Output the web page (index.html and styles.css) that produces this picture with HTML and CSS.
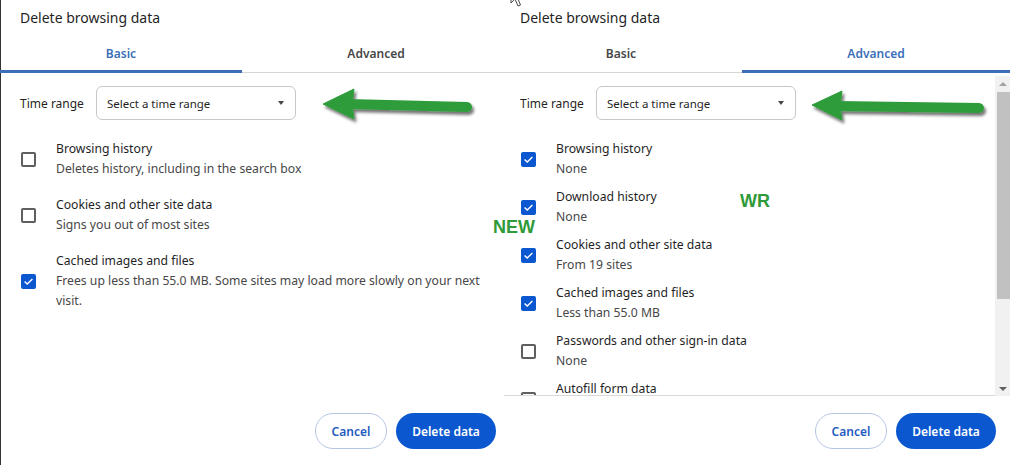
FILE: index.html
```html
<!DOCTYPE html>
<html lang="en">
<head>
<meta charset="utf-8">
<title>Delete browsing data</title>
<link rel="stylesheet" href="styles.css">
</head>
<body>
<div class="page">
  <section class="panel panel-left">
    <div class="panel-inner">
      <h1 class="title">Delete browsing data</h1>
      <div class="tabs">
        <div class="tab tab-basic active">Basic</div>
        <div class="tab tab-adv">Advanced</div>
      </div>
      <div class="body">
        <div class="range-row">
          <span class="range-label">Time range</span>
          <div class="select"><span>Select a time range</span><span class="caret"></span></div>
        </div>
        <ul class="items items-basic">
          <li class="item">
            <span class="cb"></span>
            <div class="item-text">
              <div class="item-title">Browsing history</div>
              <div class="item-sub">Deletes history, including in the search box</div>
            </div>
          </li>
          <li class="item">
            <span class="cb"></span>
            <div class="item-text">
              <div class="item-title">Cookies and other site data</div>
              <div class="item-sub">Signs you out of most sites</div>
            </div>
          </li>
          <li class="item">
            <span class="cb on"><svg viewBox="0 0 15 15" width="15" height="15"><path d="M3.6 7.6 L6.2 10.1 L11.4 4.9" fill="none" stroke="#fff" stroke-width="1.4"/></svg></span>
            <div class="item-text">
              <div class="item-title">Cached images and files</div>
              <div class="item-sub">Frees up less than 55.0 MB. Some sites may load more slowly on your next visit.</div>
            </div>
          </li>
        </ul>
      </div>
      <div class="footer">
        <button class="btn btn-cancel">Cancel</button>
        <button class="btn btn-primary">Delete data</button>
      </div>
    </div>
  </section>

  <section class="panel panel-right">
    <h1 class="title">Delete browsing data</h1>
    <div class="tabs">
      <div class="tab tab-basic">Basic</div>
      <div class="tab tab-adv active">Advanced</div>
    </div>
    <div class="scroll-area">
      <div class="scroll-content">
        <div class="range-row">
          <span class="range-label">Time range</span>
          <div class="select"><span>Select a time range</span><span class="caret"></span></div>
        </div>
        <ul class="items items-adv">
          <li class="item">
            <span class="cb on"><svg viewBox="0 0 15 15" width="15" height="15"><path d="M3.6 7.6 L6.2 10.1 L11.4 4.9" fill="none" stroke="#fff" stroke-width="1.4"/></svg></span>
            <div class="item-text">
              <div class="item-title">Browsing history</div>
              <div class="item-sub">None</div>
            </div>
          </li>
          <li class="item">
            <span class="cb on"><svg viewBox="0 0 15 15" width="15" height="15"><path d="M3.6 7.6 L6.2 10.1 L11.4 4.9" fill="none" stroke="#fff" stroke-width="1.4"/></svg></span>
            <div class="item-text">
              <div class="item-title">Download history</div>
              <div class="item-sub">None</div>
            </div>
          </li>
          <li class="item">
            <span class="cb on"><svg viewBox="0 0 15 15" width="15" height="15"><path d="M3.6 7.6 L6.2 10.1 L11.4 4.9" fill="none" stroke="#fff" stroke-width="1.4"/></svg></span>
            <div class="item-text">
              <div class="item-title">Cookies and other site data</div>
              <div class="item-sub">From 19 sites</div>
            </div>
          </li>
          <li class="item">
            <span class="cb on"><svg viewBox="0 0 15 15" width="15" height="15"><path d="M3.6 7.6 L6.2 10.1 L11.4 4.9" fill="none" stroke="#fff" stroke-width="1.4"/></svg></span>
            <div class="item-text">
              <div class="item-title">Cached images and files</div>
              <div class="item-sub">Less than 55.0 MB</div>
            </div>
          </li>
          <li class="item">
            <span class="cb"></span>
            <div class="item-text">
              <div class="item-title">Passwords and other sign-in data</div>
              <div class="item-sub">None</div>
            </div>
          </li>
          <li class="item">
            <span class="cb"></span>
            <div class="item-text item-text-tall">
              <div class="item-title">Autofill form data</div>
            </div>
          </li>
        </ul>
      </div>
      <div class="scrollbar">
        <div class="sb-btn"><span class="sb-up"></span></div>
        <div class="sb-thumb"></div>
        <div class="sb-track"></div>
        <div class="sb-btn"><span class="sb-down"></span></div>
      </div>
    </div>
    <div class="footer">
      <button class="btn btn-cancel">Cancel</button>
      <button class="btn btn-primary">Delete data</button>
    </div>
  </section>

  <svg class="annot" width="1010" height="465" viewBox="0 0 1010 465">
    <defs>
      <filter id="sh" x="-10%" y="-50%" width="120%" height="200%">
        <feGaussianBlur in="SourceAlpha" stdDeviation="1.6"/>
        <feOffset dx="2" dy="3" result="b"/>
        <feComponentTransfer><feFuncA type="linear" slope="0.55"/></feComponentTransfer>
        <feMerge><feMergeNode/><feMergeNode in="SourceGraphic"/></feMerge>
      </filter>
    </defs>
    <g filter="url(#sh)" fill="#2e9c3b" stroke="#2e9c3b">
      <line x1="348" y1="104" x2="467" y2="107" stroke-width="10" stroke-linecap="round"/>
      <polygon points="323,104 354,89 352,104 354,119" stroke-width="1" stroke-linejoin="round"/>
      <line x1="836" y1="106" x2="979" y2="108" stroke-width="10" stroke-linecap="round"/>
      <polygon points="812,105 842,91 840,106 842,120" stroke-width="1" stroke-linejoin="round"/>
    </g>
    <path d="M511 -14 L511 3 L515 -1 L518 6 L520.5 5 L517.6 -2 L523 -2 Z" fill="#fff" stroke="#333" stroke-width="0.9"/>
  </svg>
  <div class="tag tag-new">NEW</div>
  <div class="tag tag-wr">WR</div>
</div>
</body>
</html>
```

FILE: styles.css
```css
* { box-sizing: border-box; }
html, body { margin: 0; padding: 0; }
body {
  width: 1010px;
  height: 465px;
  overflow: hidden;
  background: #fff;
  font-family: "Noto Sans", "Open Sans", sans-serif;
  color: #1f1f1f;
}
.page {
  position: relative;
  display: flex;
  width: 1010px;
  height: 465px;
}
.panel-left {
  flex: none;
  width: 500px;
  height: 465px;
  overflow: hidden;
  box-shadow: inset 1px 0 0 #333;
}
.panel-inner {
  width: 510px;
  height: 465px;
  display: flex;
  flex-direction: column;
}
.panel-right {
  flex: none;
  width: 510px;
  height: 465px;
  display: flex;
  flex-direction: column;
}
.title {
  flex: none;
  margin: 0;
  height: 28px;
  padding: 8px 0 0 20px;
  font-size: 14px;
  font-weight: 400;
  line-height: 20px;
  color: #1f1f1f;
}
.tabs {
  flex: none;
  display: flex;
  height: 45px;
  border-bottom: 1px solid #d6d6d6;
}
.tab {
  height: 44px;
  display: flex;
  align-items: center;
  justify-content: center;
  padding-top: 6px;
  font-size: 12px;
  font-weight: 600;
  color: #474747;
}
.tab-basic { width: 242px; }
.tab-adv { width: 268px; }
.tab.active {
  height: 45px;
  margin-bottom: -1px;
  padding-top: 8px;
  border-bottom: 3px solid #3b6fb8;
  color: #3b6fb8;
}
.body {
  flex: 1;
  padding-left: 20px;
}
.range-row {
  display: flex;
  align-items: center;
  height: 34px;
  margin-top: 13px;
}
.range-label {
  width: 76px;
  font-size: 12px;
  color: #1f1f1f;
}
.select {
  width: 200px;
  height: 34px;
  border: 1px solid #c8c8c8;
  border-radius: 6px;
  display: flex;
  align-items: center;
  justify-content: space-between;
  padding: 0 11px 0 10px;
  font-size: 11.5px;
  color: #1f1f1f;
}
.caret {
  width: 0;
  height: 0;
  border-left: 3.5px solid transparent;
  border-right: 3.5px solid transparent;
  border-top: 4px solid #474747;
}
.items {
  list-style: none;
  margin: 19px 0 0;
  padding: 0 14px 0 0;
  display: flex;
  flex-direction: column;
}
.items-basic { gap: 16px; }
.items-adv { gap: 8px; }
.item {
  display: flex;
  align-items: center;
}
.cb {
  flex: none;
  width: 15px;
  height: 15px;
  margin-left: 1px;
  margin-right: 20px;
  border: 2px solid #5f5f5f;
  border-radius: 2px;
  display: flex;
}
.cb.on {
  border: none;
  background: #0b57d0;
}
.item-title, .item-sub {
  font-size: 12.2px;
  line-height: 20px;
}
.item-title { color: #1f1f1f; }
.item-sub { color: #474747; }
.item-text-tall { min-height: 40px; }
.scroll-area {
  flex: none;
  height: 323px;
  display: flex;
}
.scroll-content {
  flex: 1;
  overflow: hidden;
  margin-left: 4px;
  padding-left: 16px;
  border-bottom: 1px solid #d9d9d9;
}
.scrollbar {
  flex: none;
  width: 15px;
  margin-top: 3px;
  background: #f1f1f1;
  display: flex;
  flex-direction: column;
}
.sb-btn {
  flex: none;
  height: 15px;
  display: flex;
  align-items: center;
  justify-content: center;
}
.sb-up {
  width: 0; height: 0;
  border-left: 4px solid transparent;
  border-right: 4px solid transparent;
  border-bottom: 4px solid #a3a3a3;
}
.sb-down {
  width: 0; height: 0;
  border-left: 4px solid transparent;
  border-right: 4px solid transparent;
  border-top: 4px solid #606060;
}
.sb-thumb {
  flex: none;
  height: 207px;
  margin: 1px 0 0 2px;
  background: #c1c1c1;
}
.sb-track { flex: 1; }
.footer {
  flex: none;
  height: 69px;
  display: flex;
  justify-content: flex-end;
  align-items: flex-start;
  gap: 9px;
  padding: 17px 14px 0 0;
}
.btn {
  height: 36px;
  border-radius: 18px;
  padding: 0;
  font-family: inherit;
  font-size: 12px;
  font-weight: 600;
}
.btn-cancel {
  width: 72px;
  background: #fff;
  border: 1px solid #b4c6e2;
  color: #1f5bbf;
}
.btn-primary {
  width: 100px;
  background: #0b57d0;
  border: none;
  color: #fff;
}
.annot {
  position: absolute;
  left: 0;
  top: 0;
  pointer-events: none;
}
.tag {
  position: absolute;
  font-family: "Liberation Sans", Arial, sans-serif;
  font-weight: 700;
  font-size: 18px;
  line-height: 1;
  color: #2e9a3a;
}
.tag-new { left: 493px; top: 218px; }
.tag-wr { left: 740px; top: 192px; }
```
